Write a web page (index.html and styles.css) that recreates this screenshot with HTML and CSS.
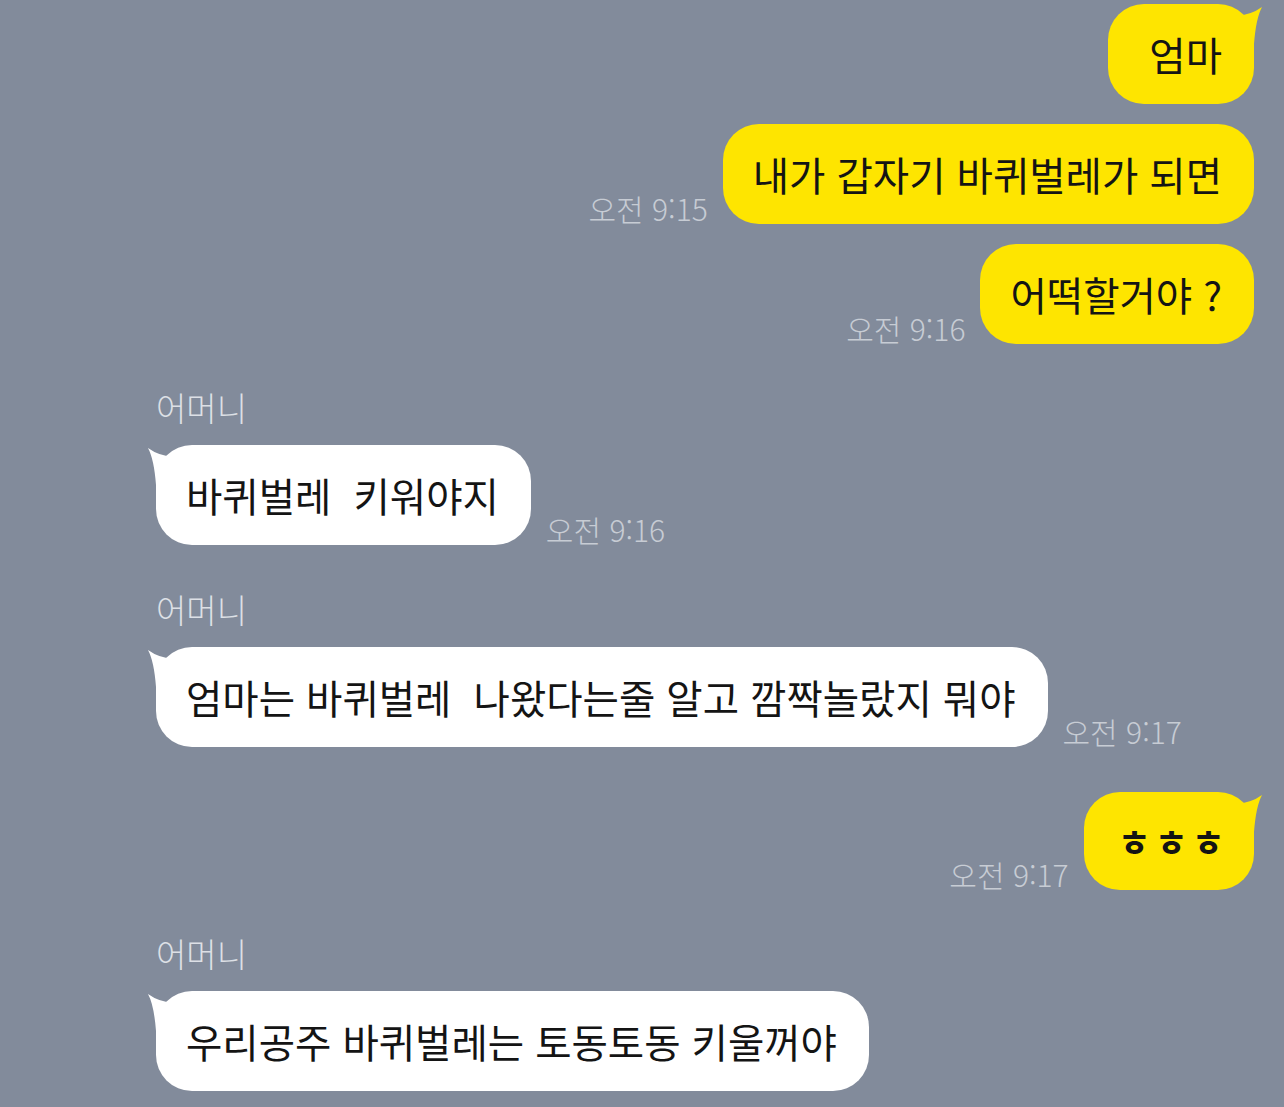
FILE: index.html
```html
<!DOCTYPE html>
<html lang="ko">
<head>
<meta charset="utf-8">
<title>채팅</title>
<link rel="stylesheet" href="styles.css">
</head>
<body>
<main class="chat">
  <div class="row sent first">
    <div class="bubble yellow short">엄마<svg class="tail tail-right" viewBox="0 0 34 44" aria-hidden="true"><path d="M2,20 L6,12 Q21,11 32,3 Q26,14 24,40 L2,40 Z"/></svg></div>
  </div>
  <div class="row sent cont">
    <span class="time">오전 9:15</span>
    <div class="bubble yellow">내가 갑자기 바퀴벌레가 되면</div>
  </div>
  <div class="row sent cont">
    <span class="time">오전 9:16</span>
    <div class="bubble yellow">어떡할거야 ?</div>
  </div>

  <section class="group recv g1">
    <div class="name">어머니</div>
    <div class="row">
      <div class="bubble white">바퀴벌레&nbsp; 키워야지<svg class="tail tail-left" viewBox="0 0 34 44" aria-hidden="true"><path d="M32,20 L28,12 Q13,11 2,3 Q8,14 10,40 L32,40 Z"/></svg></div>
      <span class="time">오전 9:16</span>
    </div>
  </section>

  <section class="group recv g2">
    <div class="name">어머니</div>
    <div class="row">
      <div class="bubble white">엄마는 바퀴벌레&nbsp; 나왔다는줄 알고 깜짝놀랐지 뭐야<svg class="tail tail-left" viewBox="0 0 34 44" aria-hidden="true"><path d="M32,20 L28,12 Q13,11 2,3 Q8,14 10,40 L32,40 Z"/></svg></div>
      <span class="time">오전 9:17</span>
    </div>
  </section>

  <div class="row sent g3">
    <span class="time">오전 9:17</span>
    <div class="bubble yellow small">ㅎㅎㅎ<svg class="tail tail-right" viewBox="0 0 34 44" aria-hidden="true"><path d="M2,20 L6,12 Q21,11 32,3 Q26,14 24,40 L2,40 Z"/></svg></div>
  </div>

  <section class="group recv g4">
    <div class="name">어머니</div>
    <div class="row">
      <div class="bubble white">우리공주 바퀴벌레는 토동토동 키울꺼야<svg class="tail tail-left" viewBox="0 0 34 44" aria-hidden="true"><path d="M32,20 L28,12 Q13,11 2,3 Q8,14 10,40 L32,40 Z"/></svg></div>
    </div>
  </section>
</main>
</body>
</html>
```

FILE: styles.css
```css
html, body {
  margin: 0;
  padding: 0;
  background: #828b9b;
}

body {
  font-family: "Noto Sans CJK KR", "Noto Sans", sans-serif;
  width: 1284px;
  height: 1107px;
  overflow: hidden;
}

.chat {
  display: flex;
  flex-direction: column;
  padding: 4px 30px 0 156px;
}

.row {
  display: flex;
  align-items: flex-end;
  gap: 15px;
}

.sent {
  justify-content: flex-end;
}

.cont {
  margin-top: 20px;
}

.group {
  display: flex;
  flex-direction: column;
}

.g1 { margin-top: 43px; }
.g2 { margin-top: 44px; }
.g3 { margin-top: 45px; }
.g4 { margin-top: 43px; }

.name {
  font-size: 33px;
  line-height: 40px;
  font-weight: 300;
  color: #dde0e6;
  letter-spacing: 0;
  margin-bottom: 18px;
}

.bubble {
  position: relative;
  box-sizing: border-box;
  height: 100px;
  display: flex;
  align-items: center;
  padding: 0 32px 2px 30px;
  border-radius: 36px;
  font-size: 39.5px;
  letter-spacing: 0;
  color: #141414;
  white-space: nowrap;
}

.short {
  padding-left: 41px;
}

.yellow {
  background: #fee500;
  fill: #fee500;
}

.white {
  background: #ffffff;
  fill: #ffffff;
}

.small {
  height: 98px;
  padding: 0 25px 0 34px;
  font-size: 36px;
  font-weight: 700;
  letter-spacing: 4px;
}

.tail {
  position: absolute;
  top: 0;
  width: 34px;
  height: 44px;
}

.tail-right {
  right: -10px;
}

.tail-left {
  left: -10px;
}

.time {
  font-size: 30px;
  line-height: 30px;
  font-weight: 300;
  color: #c7ccd4;
  letter-spacing: 0;
  margin-bottom: 1px;
  white-space: nowrap;
}
```
